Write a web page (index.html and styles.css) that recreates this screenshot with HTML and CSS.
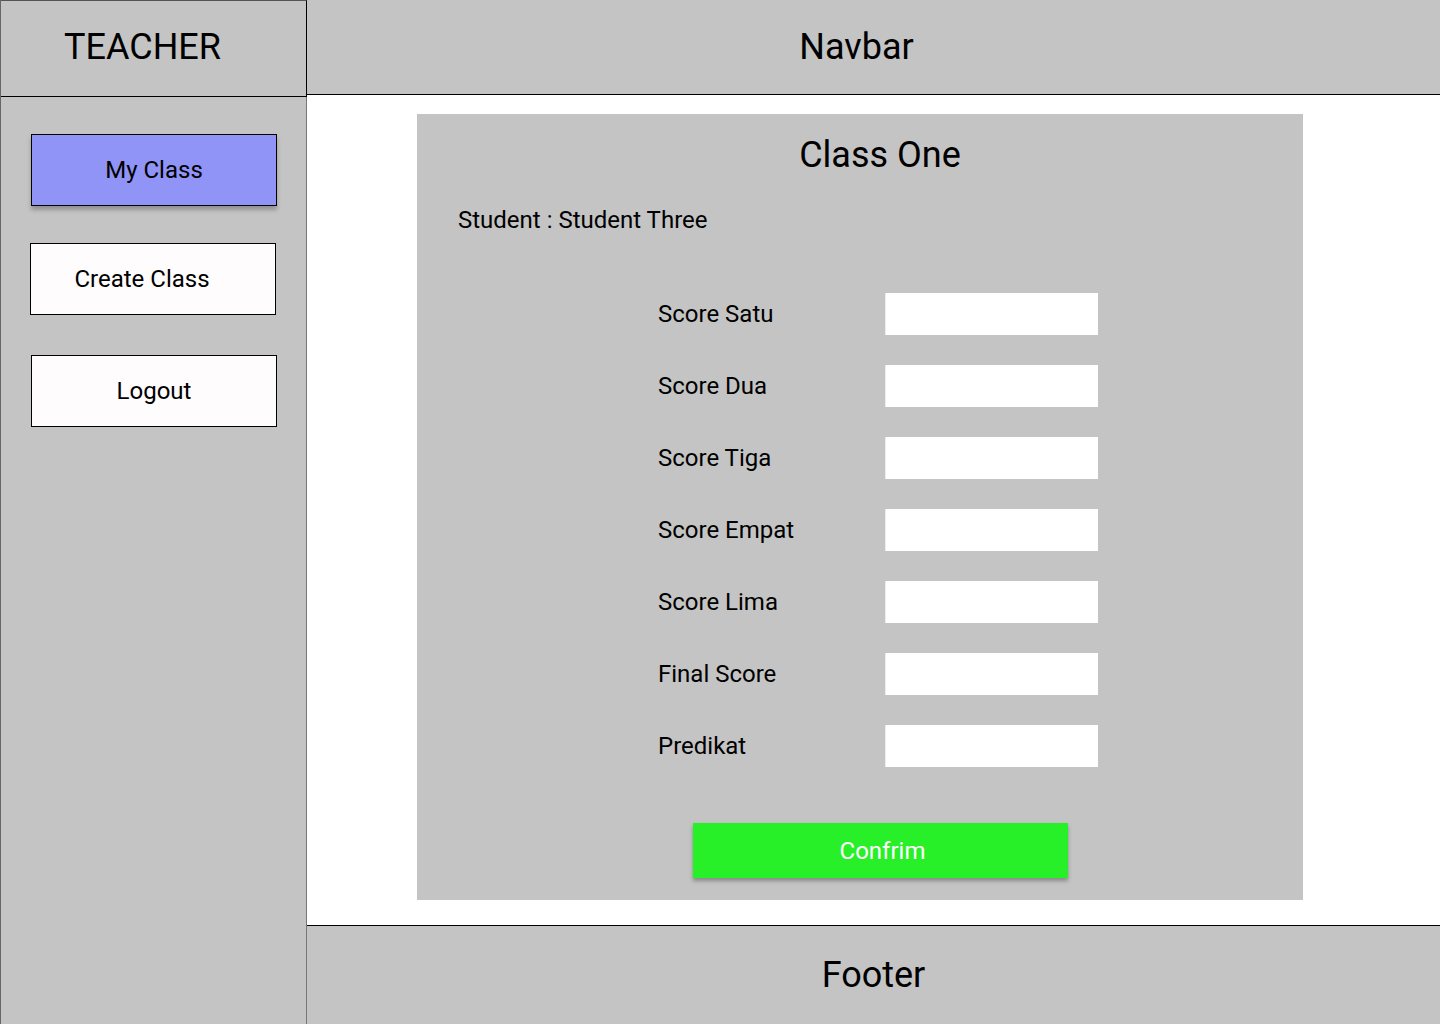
FILE: index.html
```html
<!DOCTYPE html>
<html lang="en">
<head>
<meta charset="utf-8">
<title>Teacher - Class One</title>
<link rel="stylesheet" href="styles.css">
</head>
<body>
<div class="app">
  <aside class="sidebar">
    <div class="brand">TEACHER</div>
    <nav class="side-nav">
      <a class="nav-btn nav-btn--active" href="#">My Class</a>
      <a class="nav-btn nav-btn--create" href="#">Create Class</a>
      <a class="nav-btn nav-btn--logout" href="#">Logout</a>
    </nav>
  </aside>
  <div class="main-col">
    <header class="navbar"><span class="navbar-title">Navbar</span></header>
    <main class="content">
      <section class="card">
        <h1 class="card-title">Class One</h1>
        <p class="student">Student : Student Three</p>
        <form class="score-form">
          <div class="score-grid">
            <label class="score-label">Score Satu</label><input class="score-input" type="text">
            <label class="score-label">Score Dua</label><input class="score-input" type="text">
            <label class="score-label">Score Tiga</label><input class="score-input" type="text">
            <label class="score-label">Score Empat</label><input class="score-input" type="text">
            <label class="score-label">Score Lima</label><input class="score-input" type="text">
            <label class="score-label">Final Score</label><input class="score-input" type="text">
            <label class="score-label">Predikat</label><input class="score-input" type="text">
          </div>
          <button class="confirm-btn" type="button">Confrim</button>
        </form>
      </section>
    </main>
    <footer class="footer">Footer</footer>
  </div>
</div>
</body>
</html>
```

FILE: styles.css
```css
* { box-sizing: border-box; }

html, body {
  margin: 0;
  padding: 0;
}

body {
  font-family: Roboto, "Liberation Sans", Arial, sans-serif;
  color: #000;
  background: #fff;
}

.app {
  display: grid;
  grid-template-columns: 307px 1fr;
  width: 1440px;
  height: 1024px;
}

/* Sidebar */
.sidebar {
  display: flex;
  flex-direction: column;
  background: #c4c4c4;
  border-left: 1px solid #666;
}

.brand {
  height: 97px;
  display: flex;
  align-items: center;
  justify-content: center;
  padding: 0 22px 4px 0;
  font-size: 36px;
  border-top: 1px solid #555;
  border-right: 1px solid #000;
  border-bottom: 1px solid #000;
}

.side-nav {
  flex: 1;
  display: flex;
  flex-direction: column;
  padding: 37px 0 0 30px;
  border-right: 1px solid #777;
}

.nav-btn {
  display: flex;
  align-items: center;
  justify-content: center;
  width: 246px;
  height: 72px;
  border: 1px solid #000;
  background: #fffcfd;
  color: #000;
  font-size: 24px;
  text-decoration: none;
}

.nav-btn--active {
  background: #8f94f6;
  box-shadow: 0 4px 4px rgba(0, 0, 0, 0.25);
}

.nav-btn--create {
  margin-top: 37px;
  margin-left: -1px;
  padding-right: 22px;
}

.nav-btn--logout {
  margin-top: 40px;
}

/* Main column */
.main-col {
  display: flex;
  flex-direction: column;
  min-width: 0;
}

.navbar {
  height: 95px;
  display: flex;
  align-items: center;
  justify-content: center;
  padding-right: 34px;
  background: #c4c4c4;
  border-bottom: 1px solid #000;
  font-size: 36px;
}

.content {
  flex: 1;
  padding: 19px 0 0 110px;
  background: #fff;
}

.card {
  width: 886px;
  height: 786px;
  background: #c4c4c4;
  padding-top: 20px;
}

.card-title {
  margin: 0;
  padding-left: 40px;
  text-align: center;
  font-size: 36px;
  font-weight: 400;
  line-height: 42px;
}

.student {
  margin: 30px 0 0;
  padding-left: 41px;
  font-size: 24px;
  line-height: 28px;
}

.score-form {
  display: flex;
  flex-direction: column;
  margin-top: 59px;
}

.score-grid {
  display: grid;
  grid-template-columns: 227px 213px;
  row-gap: 30px;
  margin-left: 241px;
}

.score-label {
  display: flex;
  align-items: center;
  height: 42px;
  font-size: 24px;
}

.score-input {
  width: 213px;
  height: 42px;
  border: none;
  border-left: 1px solid #ededed;
  background: #fff;
  margin: 0;
  padding: 0 8px;
  font-family: inherit;
  font-size: 20px;
}

.confirm-btn {
  align-self: flex-start;
  margin: 56px 0 0 276px;
  width: 375px;
  height: 55px;
  border: none;
  background: #28f028;
  color: #fff;
  font-family: inherit;
  font-size: 24px;
  padding: 0 0 0 4px;
  box-shadow: 0 3px 4px rgba(0, 0, 0, 0.3);
  cursor: pointer;
}

.footer {
  height: 99px;
  display: flex;
  align-items: center;
  justify-content: center;
  background: #c4c4c4;
  border-top: 1px solid #000;
  font-size: 36px;
}
```
